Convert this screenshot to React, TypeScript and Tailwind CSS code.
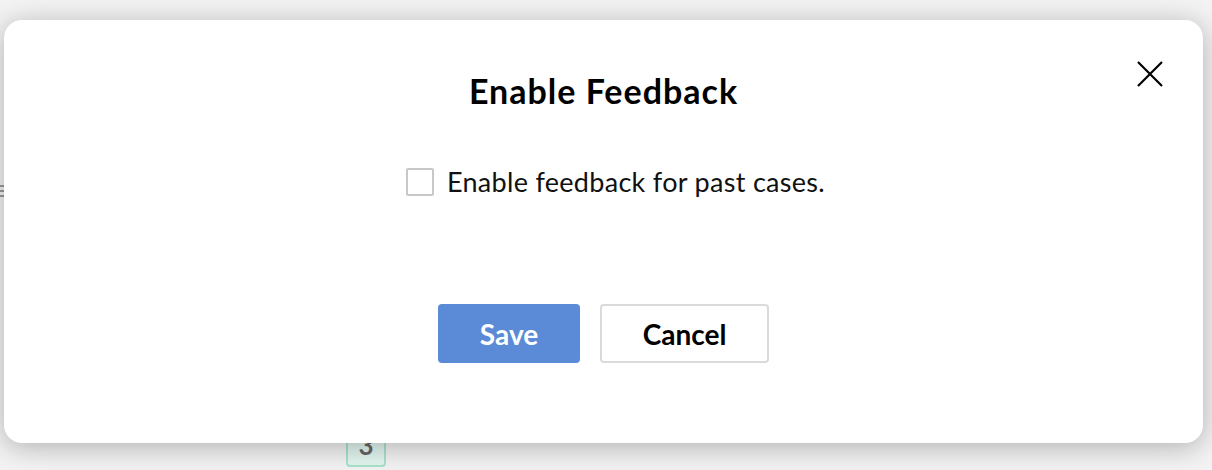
export default function App() {
  return (
    <div className="relative h-[470px] w-[1212px] overflow-hidden bg-[#f3f3f3] font-['Lato','Liberation_Sans',sans-serif]">
      {/* page behind the dialog */}
      <div className="absolute left-0 top-[185px] flex w-[5px] flex-col gap-[3px]">
        <div className="h-[2px] bg-[#9a9a9a]" />
        <div className="h-[2px] bg-[#9a9a9a]" />
        <div className="h-[2px] bg-[#9a9a9a]" />
      </div>
      <div className="absolute left-[346px] top-[424px] flex h-[43px] w-[40px] items-center justify-center rounded-[4px] border-2 border-[#a9e2cc] bg-[#e2f6ef] text-[26px] font-bold text-[#666]">
        3
      </div>

      <div className="pl-[4px] pt-[20px]">
        <div className="relative z-10 flex h-[423px] w-[1199px] flex-col items-center rounded-[18px] bg-white shadow-[0_4px_28px_rgba(0,0,0,0.28)]">
          <button className="absolute right-[40px] top-[41px] flex h-[26px] w-[26px] items-center justify-center text-black">
            <svg width="26" height="26" viewBox="0 0 26 26" fill="none" stroke="currentColor" strokeWidth="2.2">
              <path d="M1 1L25 25M25 1L1 25" />
            </svg>
          </button>

          <h2 className="mt-[51px] text-[34px] font-bold leading-[40px] tracking-[1px] text-black">Enable Feedback</h2>

          <label className="ml-[24px] mt-[55px] flex items-center gap-[13px]">
            <span className="h-[28px] w-[28px] rounded-[2px] border-2 border-[#c8c8c8] bg-white" />
            <span className="text-[27px] leading-[32px] tracking-[0.3px] text-[#111]">Enable feedback for past cases.</span>
          </label>

          <div className="mt-[106px] flex gap-[20px]">
            <button className="flex h-[59px] w-[142px] items-center justify-center rounded-[4px] bg-[#5b8ad7] text-[28px] font-bold text-white">
              Save
            </button>
            <button className="flex h-[59px] w-[169px] items-center justify-center rounded-[4px] border-2 border-[#dadada] bg-white text-[28px] font-bold text-black">
              Cancel
            </button>
          </div>
        </div>
      </div>
    </div>
  )
}
